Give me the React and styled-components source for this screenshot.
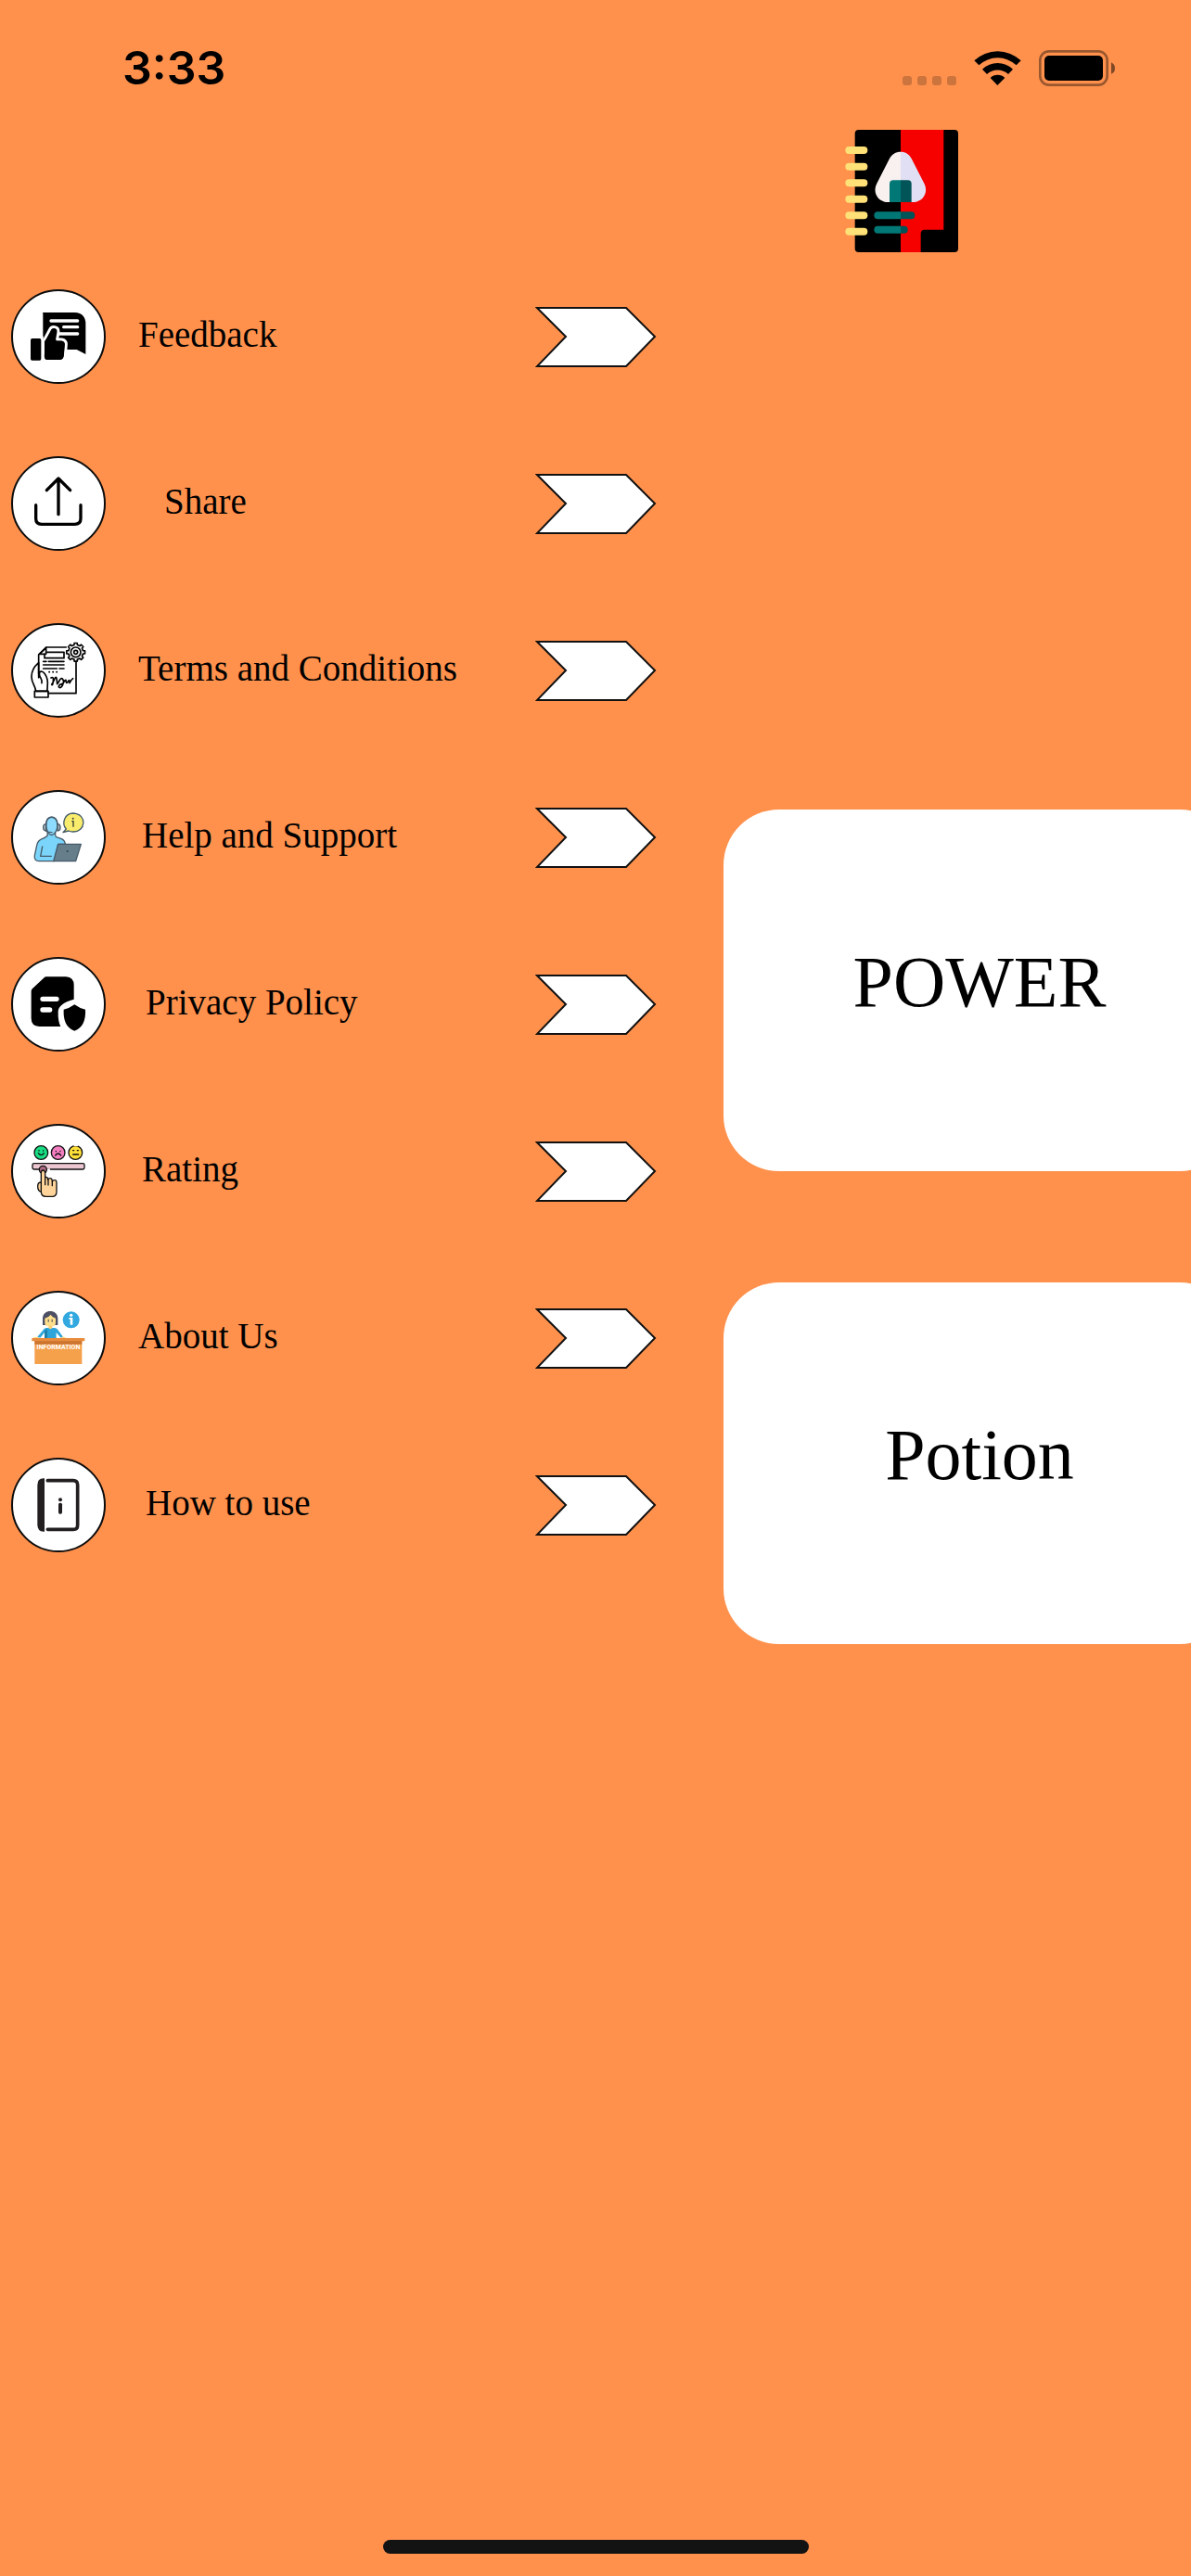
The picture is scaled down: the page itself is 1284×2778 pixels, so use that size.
import React from "react";
import styled, { createGlobalStyle } from "styled-components";

const ORANGE = "#ff914d";
const SERIF = '"Liberation Serif", "Times New Roman", serif';

const GlobalStyle = createGlobalStyle`
  *, *::before, *::after { box-sizing: border-box; }
  body { margin: 0; background: ${ORANGE}; color: #000; }
  svg { display: block; }
`;

const Screen = styled.div`
  min-height: 100vh;
  display: flex;
  flex-direction: column;
  overflow: hidden;
  background: ${ORANGE};
`;

const StatusBar = styled.header`
  height: 132px;
  padding: 14px 82px 0 132px;
  display: flex;
  align-items: center;
  justify-content: space-between;
`;

const Clock = styled.time`
  font: 600 50px/60px Inter, sans-serif;
`;

const StatusIcons = styled.div`
  display: flex;
  gap: 19px;
`;

const Content = styled.main`
  display: grid;
  grid-template-columns: 780fr 504fr;
`;

const Menu = styled.ul`
  list-style: none;
  margin: 0;
  padding: 180px 72px 0 12px;
  display: flex;
  flex-direction: column;
  gap: 78px;
`;

const PlainButton = styled.button`
  margin: 0;
  padding: 0;
  border: 0;
  background: none;
  color: inherit;
  cursor: pointer;
`;

const MenuButton = styled(PlainButton)`
  width: 100%;
  display: flex;
  align-items: center;
  text-align: left;
`;

const IconDisc = styled.span`
  flex: none;
  width: 102px;
  height: 102px;
  border: 2px solid #0c0c0c;
  border-radius: 50%;
  background: #fff;
`;

const Label = styled.span`
  flex: 1;
  padding: 0 0 4px ${(p) => 35 + p.$indent * 4}px;
  font: 400 39px/48px ${SERIF};
  white-space: nowrap;
`;

const Side = styled.section`
  padding-top: 8px;
`;

const Logo = styled.div`
  padding-left: 131px;
`;

const Cards = styled.div`
  margin: 601px -48px 0 0;
  display: flex;
  flex-direction: column;
  gap: 120px;
`;

const Card = styled(PlainButton)`
  height: 390px;
  padding-bottom: 18px;
  border-radius: 60px;
  background: #fff;
  font: 400 78px/90px ${SERIF};
`;

const HomeArea = styled.footer`
  margin-top: auto;
  padding: 48px 0 24px;
  display: flex;
  justify-content: center;
`;

const HomeIndicator = styled.div`
  width: 459px;
  height: 15px;
  border-radius: 8px;
  background: #131313;
`;

/* ---------- status icons ---------- */

const Cellular = () => (
  <svg width="58" height="39" viewBox="219 69 174 117" aria-hidden="true">
    {[219, 267, 315, 363].map((x) => (
      <rect key={x} x={x} y="153" width="30" height="30" rx="9" fill="#000" opacity=".2" />
    ))}
  </svg>
);

const Wifi = () => (
  <svg width="51" height="39" viewBox="450 69 153 117" aria-hidden="true">
    <path d="M451 103A110 110 0 0 1 602 103L587 118A88 88 0 0 0 466 118Z" />
    <path d="M477 131A72 72 0 0 1 576 131L561 147A50 50 0 0 0 492 147Z" />
    <path d="M503 159A34 34 0 0 1 550 159L526 183Z" />
  </svg>
);

const Battery = () => (
  <svg width="82" height="39" viewBox="660 69 246 117" aria-hidden="true">
    <rect x="664" y="73" width="217" height="109" rx="29" fill="none" stroke="#000" strokeWidth="8" opacity=".4" />
    <rect x="678" y="87" width="189" height="81" rx="15" />
    <path d="M894 109Q906 115 906 128T894 146Z" opacity=".5" />
  </svg>
);

/* ---------- logo ---------- */

const NotebookLogo = () => (
  <svg width="122" height="132" viewBox="33 330 366 396" role="img" aria-label="Recipe notebook">
    <rect x="65" y="330" width="334" height="396" rx="12" />
    <path fill="#f70000" d="M213 330H352V653H290Q278 653 278 666V726H213Z" />
    {[384, 437, 490, 542, 595, 647].map((y) => (
      <rect key={y} x="34" y={y} width="72" height="24" rx="12" fill="#ffe177" />
    ))}
    <path fill="#f9f0f0" d="M213 401C197 401 184 409 177 423L136 503C120 534 142 564 172 564H213Z" />
    <path fill="#e0dff4" d="M213 401C229 401 241 409 248 423L289 503C305 534 283 564 253 564H213Z" />
    <path fill="#017876" d="M213 493H189Q177 493 177 505V564H213Z" />
    <path fill="#015457" d="M213 493H236Q248 493 248 505V564H213Z" />
    <path fill="#017876" d="M213 595H139A12 12 0 0 0 139 619H213ZM213 641H139A12 12 0 0 0 139 665H213Z" />
    <path fill="#015457" d="M213 595H247A12 12 0 0 1 247 619H213ZM213 641H224A12 12 0 0 1 224 665H213Z" />
  </svg>
);

/* ---------- menu icons, all drawn on a 294-unit square ---------- */

const ODD = "44 42 294 294";
const EVEN = "44 582 294 294";

const Glyph = ({ box, children }) => (
  <svg width="98" height="98" viewBox={box} aria-hidden="true">
    {children}
  </svg>
);

const FeedbackIcon = () => (
  <Glyph box={ODD}>
    <path d="M146 111H244Q279 113 279 148V246L250 231H198V111H141V116Q141 111 146 111Z" />
    <path d="M141 111H220V231H141Z" />
    <path d="M167 138H253M208 158H253M190 180H253" stroke="#fff" strokeWidth="10" strokeLinecap="round" />
    <path
      d="M143 204L162 168C168 153 192 154 191 174L187 198H202Q216 200 216 214L213 252Q210 268 198 268H147Q141 262 141 252Z"
      stroke="#fff"
      strokeWidth="9"
      strokeLinejoin="round"
    />
    <rect x="94" y="188" width="48" height="84" fill="#fff" />
    <rect x="101" y="195" width="34" height="71" rx="5" />
    <path d="M146 205Q148 200 153 194L166 171C170 160 184 162 183 174L178 203H198Q211 204 211 214L208 248Q206 264 194 264H155Q146 263 146 253Z" />
  </Glyph>
);

const ShareIcon = () => (
  <Glyph box={EVEN}>
    <g fill="none" stroke="#000" strokeWidth="10" strokeLinecap="round" strokeLinejoin="round">
      <path d="M191 764V648M153 686L191 648L229 686" />
      <path d="M118 734V778Q118 796 136 796H244Q263 796 263 778V734" />
    </g>
  </Glyph>
);

const gearPath = (cx, cy, inner, outer, teeth) => {
  const step = (Math.PI * 2) / teeth;
  const at = (r, a) => `${(cx + r * Math.cos(a)).toFixed(1)} ${(cy + r * Math.sin(a)).toFixed(1)}`;
  let d = "";
  for (let i = 0; i < teeth; i += 1) {
    const a = i * step - Math.PI / 2;
    d += `${i ? "L" : "M"}${at(inner, a - step * 0.28)}L${at(outer, a - step * 0.2)}`;
    d += `L${at(outer, a + step * 0.2)}L${at(inner, a + step * 0.28)}`;
  }
  return `${d}Z`;
};

const TermsIcon = () => (
  <Glyph box={ODD}>
    <g fill="none" stroke="#000" strokeWidth="5" strokeLinejoin="round" strokeLinecap="round">
      <path d="M216 114H151L127 138V200M248 162V263H158" />
      <path d="M151 115V136H129L149 118" />
      <path d="M154 130H209V149H146V137" />
      <path d="M142 160H152M159 160H209M142 171H209M142 183H186M194 183H209" />
      <path d="M161 194H162M173 194H174M185 194H186" />
      <path d="M127 164C113 176 104 192 104 209C104 230 116 237 118 256H155C154 243 158 232 155 218C151 204 146 194 136 192C126 192 129 208 134 214C138 221 138 226 137 230M127 164V212" />
      <rect x="114" y="256" width="44" height="20" />
      <path d="M167 213Q176 207 174 224T169 234C175 231 179 207 184 212Q186 217 187 233C192 229 197 210 204 216C212 224 203 245 196 245C188 244 193 234 202 233C210 232 209 219 215 220Q216 235 222 225T227 230Q232 219 238 215" />
      <path d={gearPath(247, 130, 24, 30, 8)} />
      <circle cx="247" cy="130" r="16" />
      <circle cx="247" cy="130" r="6" />
    </g>
  </Glyph>
);

const SupportIcon = () => (
  <Glyph box={EVEN}>
    <g stroke="#455a68" strokeWidth="4" strokeLinejoin="round" strokeLinecap="round">
      <path fill="#7bd5fb" d="M155 712L156 723Q149 730 138 734Q124 739 121 755L114 788Q112 806 128 806H178L190 751H213Q212 739 201 734L184 728Q180 725 181 712Z" />
      <path fill="#8ddcff" d="M151 690C150 655 188 655 188 690C188 704 180 719 169 722C158 719 151 704 151 690Z" />
      <path fill="#aeb7bd" d="M151 686Q142 686 142 697T151 708ZM188 686Q197 686 197 697T188 708Z" />
      <path fill="none" d="M151 686C150 656 188 656 188 686M151 708Q157 713 170 713" />
      <path fill="none" d="M139 759L133 790H168" />
      <path fill="#667d8a" d="M190 751H264L247 806H175Z" />
      <path fill="#f9ec6c" d="M206 713L216 702C200 684 211 651 239 651C286 654 279 713 238 711Q229 711 224 708Z" />
    </g>
    <circle cx="220" cy="774" r="3" fill="#2f3f49" />
    <circle cx="238" cy="668" r="3" fill="#333d35" />
    <path d="M234 677H239V695" fill="none" stroke="#333d35" strokeWidth="4" />
  </Glyph>
);

const PrivacyIcon = () => (
  <Glyph box={ODD}>
    <path d="M151 100H215Q241 102 241 127V173Q190 187 190 213Q189 244 198 261H129Q103 260 103 235V146Q103 141 108 137L145 103Q148 100 151 100Z" />
    <path d="M140 172H185M140 207H163" stroke="#fff" strokeWidth="16" strokeLinecap="round" />
    <path d="M243 190Q259 202 278 206C280 239 270 265 243 275C216 265 206 239 208 206Q227 202 243 190Z" />
  </Glyph>
);

const RatingIcon = () => (
  <Glyph box={EVEN}>
    <g stroke="#111" strokeWidth="4" strokeLinecap="round" strokeLinejoin="round">
      <circle cx="135" cy="669" r="22" fill="#17dd83" />
      <circle cx="190" cy="669" r="22" fill="#f57fc1" />
      <circle cx="246" cy="669" r="22" fill="#ffe039" />
      <path d="M243 645H252" stroke="#fff" strokeWidth="6" />
      <path fill="none" d="M126 671Q135 683 144 671M181 678Q190 666 199 678M238 675H256" />
      <path d="M128 662V663M142 662V663M183 664V665M197 664V665M238 662H241M252 662H255" />
      <rect x="107" y="704" width="168" height="19" rx="5" fill="#ecc7d2" />
      <rect x="154" y="721" width="10" height="6" fill="#fff" stroke="none" />
      <circle cx="141" cy="724" r="12" fill="#ad6a80" />
      <path
        fill="#ffd49a"
        d="M135 765Q124 765 124 777Q124 794 135 796Q136 811 150 811H173Q185 810 185 796V766Q185 757 178 758Q172 758 171 763Q171 752 164 752Q158 752 157 757Q156 746 148 749V735Q147 726 141 726T135 735Z"
      />
      <path fill="none" d="M135 765V796M148 749V773M158 757V774M171 763V776" />
    </g>
  </Glyph>
);

const AboutIcon = () => (
  <Glyph box={ODD}>
    <path fill="#4d5065" d="M140 147V126C140 94 189 94 189 126V147Z" />
    <path fill="#ffdf8b" d="M147 125Q160 122 166 113Q171 123 182 125V139Q182 151 172 151H157Q147 151 147 139Z" />
    <path fill="#454858" d="M157 128H160V137H157ZM169 128H172V137H169Z" />
    <path fill="#ffcf76" d="M159 149H171V160H159Z" />
    <path fill="#2ea5da" d="M151 156H158Q165 163 172 156H180Q187 157 191 165L206 185L199 188L184 171V190H146V171L132 188L123 185L140 165Q144 157 151 156Z" />
    <path fill="#1f7fa8" d="M146 166L155 160V190H146Z" />
    <path fill="#ffd67d" d="M106 190Q115 183 125 186L131 190ZM217 190Q208 183 203 185L196 190Z" />
    <path fill="#f5a04b" d="M114 197H267V273H114Z" />
    <path fill="#cb7430" d="M114 197H267V209H114Z" />
    <rect x="105" y="189" width="171" height="10" rx="2" fill="#e88b3c" />
    <text
      x="191"
      y="226"
      textAnchor="middle"
      fontFamily="Roboto, sans-serif"
      fontWeight="700"
      fontSize="21"
      fill="#fff"
    >
      INFORMATION
    </text>
    <circle cx="232" cy="130" r="27" fill="#31a8df" />
    <circle cx="232" cy="115" r="5" fill="#fff" />
    <path fill="#fff" d="M225 123H237V146H229V128H225Z" />
  </Glyph>
);

const HowToIcon = () => (
  <Glyph box={EVEN}>
    <path fill="#231f20" d="M146 643V815Q123 817 123 793V665Q123 641 146 643Z" />
    <path d="M156 650H239Q253 650 253 664V794Q253 808 239 808H156" fill="none" stroke="#231f20" strokeWidth="11" strokeLinecap="round" />
    <circle cx="197" cy="712" r="6" fill="#231f20" />
    <rect x="191" y="722" width="12" height="36" rx="5" fill="#231f20" />
  </Glyph>
);

const Arrow = () => (
  <svg width="131" height="66" viewBox="0 0 131 66" aria-hidden="true">
    <path d="M2 2H98L129 33L98 65H2L33 33Z" fill="#fff" stroke="#111" strokeWidth="2" />
  </svg>
);

/* indent is counted in 4px steps */
const ITEMS = [
  { label: "Feedback", Icon: FeedbackIcon, indent: 0 },
  { label: "Share", Icon: ShareIcon, indent: 7 },
  { label: "Terms and Conditions", Icon: TermsIcon, indent: 0 },
  { label: "Help and Support", Icon: SupportIcon, indent: 1 },
  { label: "Privacy Policy", Icon: PrivacyIcon, indent: 2 },
  { label: "Rating", Icon: RatingIcon, indent: 1 },
  { label: "About Us", Icon: AboutIcon, indent: 0 },
  { label: "How to use", Icon: HowToIcon, indent: 2 },
];

export default function App() {
  return (
    <Screen>
      <GlobalStyle />
      <StatusBar>
        <Clock>3:33</Clock>
        <StatusIcons>
          <Cellular />
          <Wifi />
          <Battery />
        </StatusIcons>
      </StatusBar>
      <Content>
        <nav>
          <Menu>
            {ITEMS.map(({ label, Icon, indent }) => (
              <li key={label}>
                <MenuButton type="button">
                  <IconDisc>
                    <Icon />
                  </IconDisc>
                  <Label $indent={indent}>{label}</Label>
                  <Arrow />
                </MenuButton>
              </li>
            ))}
          </Menu>
        </nav>
        <Side>
          <Logo>
            <NotebookLogo />
          </Logo>
          <Cards>
            <Card type="button">POWER</Card>
            <Card type="button">Potion</Card>
          </Cards>
        </Side>
      </Content>
      <HomeArea>
        <HomeIndicator />
      </HomeArea>
    </Screen>
  );
}
